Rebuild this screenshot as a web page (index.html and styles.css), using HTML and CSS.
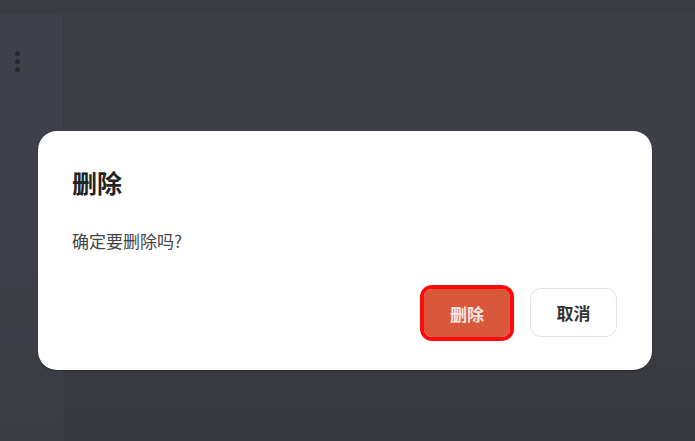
FILE: index.html
```html
<!DOCTYPE html>
<html>

<head>
  <title>删除</title>
  <meta charset="UTF-8">
  <link rel="stylesheet" href="styles.css">
</head>

<body>
  <div class="app">
    <div class="topBar"></div>
    <div class="main">
      <div class="sideBar">
        <div class="moreDots">
          <span></span>
          <span></span>
          <span></span>
        </div>
      </div>
      <div class="content"></div>
    </div>
  </div>

  <div class="overlay">
    <div class="dialog">
      <h2 class="dialogTitle">删除</h2>
      <p class="dialogText">确定要删除吗?</p>
      <div class="dialogActions">
        <button class="btn btnDanger">删除</button>
        <button class="btn btnPlain">取消</button>
      </div>
    </div>
  </div>
</body>

</html>
```

FILE: styles.css
```css
html, body {
  margin: 0;
  height: 100%;
}
body {
  font-family: "Noto Sans CJK SC", "Noto Sans", sans-serif;
  background-color: #3d3f46;
  overflow: hidden;
}
.app {
  display: flex;
  flex-direction: column;
  height: 100%;
  background: linear-gradient(180deg, #3e4047 0%, #3d3f46 60%, #36383d 100%);
}
.topBar {
  height: 15px;
  background-color: #3b3c41;
}
.main {
  flex: 1;
  display: flex;
}
.sideBar {
  width: 63px;
  border-right: 1px solid #3a3b40;
  background-color: rgba(66, 70, 80, 0.35);
  padding-top: 36px;
}
.moreDots {
  display: flex;
  flex-direction: column;
  gap: 3px;
  padding-left: 15px;
}
.moreDots span {
  width: 5px;
  height: 5px;
  border-radius: 50%;
  background-color: #26282c;
}
.content {
  flex: 1;
}

/* dialog on top of the page */
.overlay {
  position: absolute;
  top: 0;
  left: 0;
  right: 0;
  bottom: 0;
  padding: 131px 0 0 38px;
}
.dialog {
  width: 545px;
  background-color: #ffffff;
  border-radius: 19px;
  padding: 35px 35px 33px 34px;
  box-shadow: 0 1px 2px rgba(0, 0, 0, 0.3);
}
.dialogTitle {
  margin: 0;
  font-size: 25px;
  line-height: 32px;
  font-weight: bold;
  color: #222222;
}
.dialogText {
  margin: 31px 0 0 0;
  font-size: 17px;
  line-height: 24px;
  color: #444444;
}
.dialogActions {
  display: flex;
  justify-content: flex-end;
  gap: 20px;
  margin-top: 35px;
}
.btn {
  width: 87px;
  height: 49px;
  font-family: inherit;
  font-size: 17px;
  font-weight: bold;
  border-radius: 11px;
  cursor: pointer;
}
.btnDanger {
  width: 86px;
  height: 48px;
  margin-top: 1px;
  color: #fbe9e4;
  background-color: #d9573b;
  border: none;
  outline: 4px solid #ff0a0a;
  border-radius: 8px;
}
.btnPlain {
  color: #333333;
  background-color: #ffffff;
  border: 1px solid #e3e3e6;
}
```
